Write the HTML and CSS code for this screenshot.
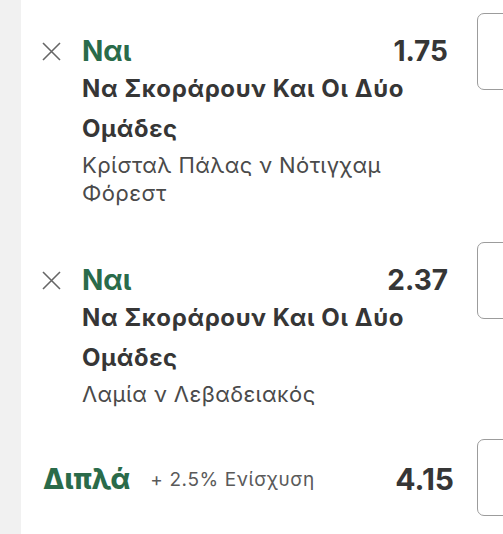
FILE: index.html
```html
<!DOCTYPE html>
<html lang="el">
<head>
<meta charset="utf-8">
<link rel="stylesheet" href="styles.css">
</head>
<body>
<div class="page">
  <div class="strip"></div>
  <main class="slip">
    <section class="sel">
      <div class="head">
        <svg class="x" viewBox="0 0 21 21" width="21" height="21"><path d="M2 2L19 19M19 2L2 19" stroke="#666" stroke-width="1.6" fill="none"/></svg>
        <span class="pick">Ναι</span>
        <span class="odds">1.75</span>
        <span class="box"></span>
      </div>
      <div class="title">Να Σκοράρουν Και Οι Δύο Ομάδες</div>
      <div class="sub">Κρίσταλ Πάλας ν Νότιγχαμ Φόρεστ</div>
    </section>
    <section class="sel">
      <div class="head">
        <svg class="x" viewBox="0 0 21 21" width="21" height="21"><path d="M2 2L19 19M19 2L2 19" stroke="#666" stroke-width="1.6" fill="none"/></svg>
        <span class="pick">Ναι</span>
        <span class="odds">2.37</span>
        <span class="box"></span>
      </div>
      <div class="title">Να Σκοράρουν Και Οι Δύο Ομάδες</div>
      <div class="sub">Λαμία ν Λεβαδειακός</div>
    </section>
    <section class="total">
      <span class="multi">Διπλά</span>
      <span class="boost">+ 2.5% Ενίσχυση</span>
      <span class="odds total-odds">4.15</span>
      <span class="box"></span>
    </section>
  </main>
</div>
</body>
</html>
```
FILE: styles.css
```css
html, body {
  margin: 0;
  padding: 0;
  background: #fff;
  overflow: hidden;
}
body {
  font-family: Inter, "Noto Sans", sans-serif;
  color: #363636;
}
.page {
  display: flex;
  width: 503px;
  height: 534px;
  overflow: hidden;
}
.strip {
  width: 21px;
  flex-shrink: 0;
  background: #f1f1f1;
}
.slip {
  flex: 1;
  min-width: 0;
  padding-top: 33px;
  display: flex;
  flex-direction: column;
}
.sel + .sel {
  margin-top: 55px;
}
.head {
  display: flex;
  align-items: center;
  height: 36px;
  padding-left: 20px;
}
.x {
  flex-shrink: 0;
  margin-right: 20px;
}
.pick {
  flex: 1;
  font-size: 28px;
  line-height: 36px;
  font-weight: 700;
  color: #2a6b4a;
}
.odds {
  font-size: 28px;
  line-height: 36px;
  font-weight: 700;
  color: #363636;
}
.box {
  flex-shrink: 0;
  width: 66px;
  height: 77px;
  margin: -20.5px -40px -20.5px 29px;
  box-sizing: border-box;
  border: 1.5px solid #9c9c9c;
  border-radius: 7px;
}
.title {
  padding-left: 61px;
  padding-right: 50px;
  font-size: 24px;
  letter-spacing: 0.6px;
  line-height: 40px;
  font-weight: 700;
  color: #363636;
}
.sub {
  margin-top: 2px;
  padding-left: 61px;
  padding-right: 90px;
  font-size: 22px;
  letter-spacing: 0.4px;
  line-height: 28px;
  color: #4a4a4a;
}
.total {
  margin-top: 51px;
  display: flex;
  align-items: center;
  height: 36px;
  padding-left: 22px;
}
.total .multi,
.total .boost,
.total .total-odds {
  margin-top: 4px;
}
.multi {
  font-size: 28px;
  font-weight: 800;
  color: #2a6b4a;
  margin-right: 20px;
}
.boost {
  flex: 1;
  font-size: 19px;
  letter-spacing: 0.6px;
  color: #5a5a5a;
}
.total-odds {
  font-size: 30px;
}
.total .box {
  margin-left: 23px;
}
```
